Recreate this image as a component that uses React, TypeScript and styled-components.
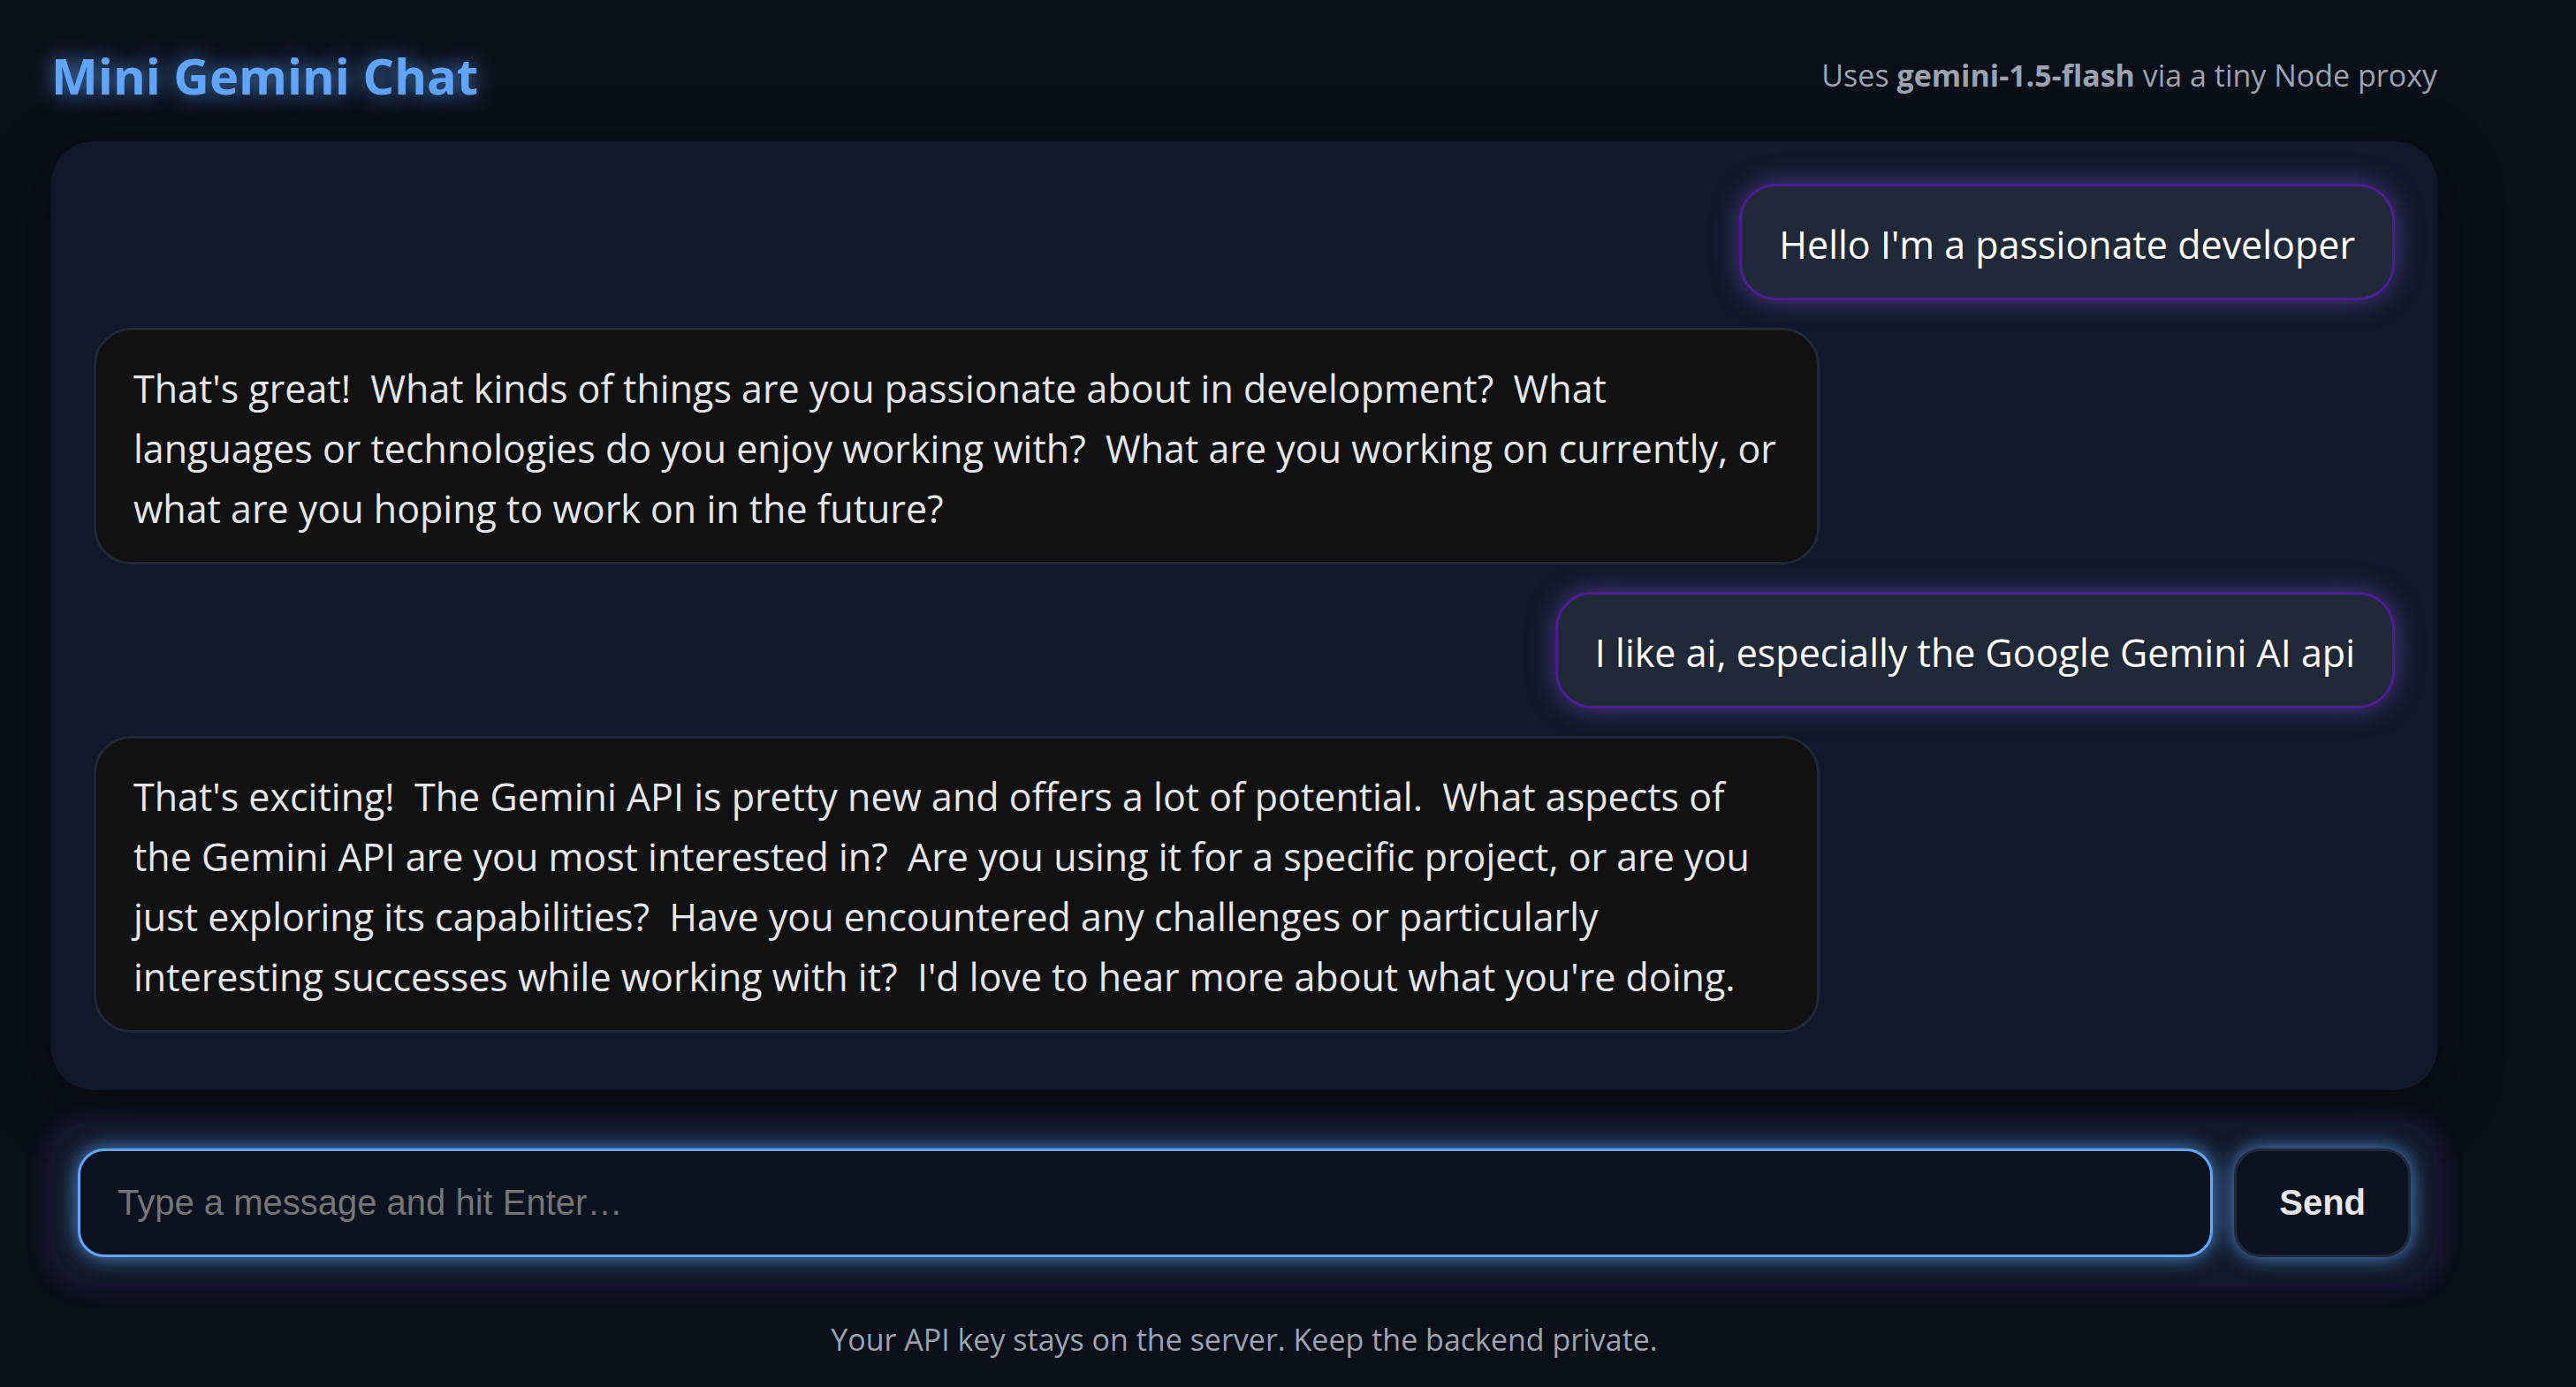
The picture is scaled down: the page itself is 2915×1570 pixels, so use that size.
import React, { useState } from "react";
import styled, { createGlobalStyle } from "styled-components";

const sans = '"Segoe UI", "Open Sans", "Noto Sans", sans-serif';
const arial = 'Arial, "Liberation Sans", sans-serif';

const GlobalStyle = createGlobalStyle`
  *, *::before, *::after { box-sizing: border-box; }
  body {
    margin: 0;
    background: #0b0f19;
    color: #e5e7eb;
    font-family: ${sans};
  }
`;

const Page = styled.div`
  display: flex;
  flex-direction: column;
  min-height: 100vh;
  padding: 45px 157px 0 58px;
`;

const Header = styled.header`
  display: flex;
  align-items: center;
  justify-content: space-between;
  margin-bottom: 35px;
`;

const Title = styled.h1`
  margin: 0;
  font-size: 56px;
  line-height: 80px;
  font-weight: 700;
  color: #60a5fa;
  text-shadow: 0 0 24px rgba(96, 165, 250, 0.8);
`;

const Hint = styled.p`
  margin: 0;
  font-size: 34px;
  line-height: 48px;
  color: #9ca3af;
`;

const Chat = styled.main`
  display: flex;
  flex-direction: column;
  gap: 31px;
  padding: 48px 48px 65px;
  border-radius: 48px;
  background: #111827;
  box-shadow: 0 18px 72px rgba(0, 0, 0, 0.35);
`;

const Bubble = styled.div<{ $mine: boolean }>`
  align-self: ${(p) => (p.$mine ? "flex-end" : "flex-start")};
  max-width: 75%;
  padding: 32px 42px 26px;
  border: 3px solid ${(p) => (p.$mine ? "#4c1d95" : "#1f2937")};
  border-radius: 42px;
  background: ${(p) => (p.$mine ? "#1f2937" : "#111111")};
  color: ${(p) => (p.$mine ? "#ffffff" : "#e5e7eb")};
  box-shadow: ${(p) => (p.$mine ? "0 0 30px rgba(139, 92, 246, 0.5)" : "none")};
  font-size: 43px;
  line-height: 68px;
  white-space: pre-wrap;
`;

const Composer = styled.form`
  display: flex;
  gap: 24px;
  margin-top: 36px;
  padding: 30px;
  border-radius: 42px;
  background: #111827;
  box-shadow: 0 0 30px rgba(147, 75, 240, 0.2);
`;

const MessageInput = styled.input`
  flex: 1;
  min-width: 0;
  padding: 36px 42px;
  border: 3px solid #60a5fa;
  border-radius: 30px;
  outline: none;
  background: #0b1220;
  color: #e5e7eb;
  font-family: ${arial};
  font-size: 40px;
  box-shadow: 0 0 24px rgba(96, 165, 250, 0.85);

  &::placeholder {
    color: #757575;
  }
`;

const SendButton = styled.button`
  padding: 0 48px;
  border: 3px solid #1f2937;
  border-radius: 30px;
  background: #0b1220;
  color: #e5e7eb;
  font-family: ${arial};
  font-size: 40px;
  font-weight: 700;
  box-shadow: 0 0 24px rgba(96, 165, 250, 0.85);
  cursor: pointer;
`;

const Footer = styled.footer`
  margin-top: 39px;
  text-align: center;
`;

const messages = [
  { mine: true, text: "Hello I'm a passionate developer" },
  {
    mine: false,
    text: "That's great!  What kinds of things are you passionate about in development?  What languages or technologies do you enjoy working with?  What are you working on currently, or what are you hoping to work on in the future?",
  },
  { mine: true, text: "I like ai, especially the Google Gemini AI api" },
  {
    mine: false,
    text: "That's exciting!  The Gemini API is pretty new and offers a lot of potential.  What aspects of the Gemini API are you most interested in?  Are you using it for a specific project, or are you just exploring its capabilities?  Have you encountered any challenges or particularly interesting successes while working with it?  I'd love to hear more about what you're doing.",
  },
];

export default function App() {
  const [draft, setDraft] = useState("");

  return (
    <>
      <GlobalStyle />
      <Page>
        <Header>
          <Title>Mini Gemini Chat</Title>
          <Hint>
            Uses <strong>gemini-1.5-flash</strong> via a tiny Node proxy
          </Hint>
        </Header>
        <Chat>
          {messages.map((m, i) => (
            <Bubble key={i} $mine={m.mine}>
              {m.text}
            </Bubble>
          ))}
        </Chat>
        <Composer onSubmit={(e) => e.preventDefault()}>
          <MessageInput
            type="text"
            aria-label="Message"
            placeholder="Type a message and hit Enter…"
            value={draft}
            onChange={(e) => setDraft(e.target.value)}
          />
          <SendButton type="submit">Send</SendButton>
        </Composer>
        <Footer>
          <Hint>Your API key stays on the server. Keep the backend private.</Hint>
        </Footer>
      </Page>
    </>
  );
}
